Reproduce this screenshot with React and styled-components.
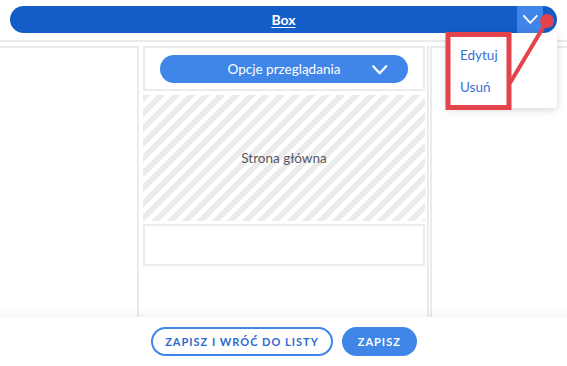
import React from 'react';
import styled, { createGlobalStyle } from 'styled-components';

const Global = createGlobalStyle`
  html, body { margin: 0; padding: 0; background: #fff; }
  body { font-family: Lato, "Liberation Sans", sans-serif; }
  * { box-sizing: border-box; }
`;

const Page = styled.div`
  position: relative;
  width: 567px;
  height: 366px;
  display: flex;
  flex-direction: column;
  background: #fff;
  overflow: hidden;
`;

const Header = styled.div`
  padding: 6px 10px 7px;
`;

const Bar = styled.div`
  height: 27px;
  border-radius: 14px;
  background: #135dc8;
  display: flex;
  align-items: stretch;
  padding-right: 14px;
`;

const BarTitle = styled.a`
  flex: 1;
  padding-left: 40px;
  display: flex;
  align-items: center;
  justify-content: center;
  color: #fff;
  font-size: 14px;
  font-weight: 700;
  text-decoration: underline;
  text-underline-offset: 2px;
`;

const BarToggle = styled.div`
  width: 26px;
  background: #3f86e8;
  display: flex;
  align-items: center;
  justify-content: center;
`;

const Divider = styled.div`
  height: 2px;
  background: #ececec;
`;

const Content = styled.div`
  flex: 1;
  display: flex;
  padding-top: 4px;
  min-height: 0;
`;

const SideColumn = styled.div`
  width: ${p => p.$width}px;
  flex: ${p => (p.$width ? 'none' : '1')};
  border-top: 2px solid #ebebeb;
  border-${p => p.$side}: 2px solid #ebebeb;
  margin-${p => p.$side}: ${p => p.$gap}px;
`;

const MainColumn = styled.div`
  width: 290px;
  padding: 0 2px 0 4px;
  border-right: 2px solid #ebebeb;
  display: flex;
  flex-direction: column;
`;

const OptionsBox = styled.div`
  border: 2px solid #ebebeb;
  padding: 7px 15px 6px;
`;

const OptionsButton = styled.div`
  height: 28px;
  border-radius: 14px;
  background: #3f86e8;
  color: #fff;
  font-size: 13.5px;
  display: flex;
  align-items: center;
  justify-content: center;
  position: relative;
`;

const ButtonChevron = styled.span`
  position: absolute;
  right: 20px;
  top: 9px;
  display: flex;
`;

const Hatched = styled.div`
  margin-top: 4px;
  height: 126px;
  display: flex;
  align-items: center;
  justify-content: center;
  color: #575762;
  font-size: 13.5px;
  background: repeating-linear-gradient(
    135deg,
    #ebebeb 0 5.3px,
    #ffffff 5.3px 10.6px
  );
`;

const EmptyBox = styled.div`
  margin-top: 3px;
  height: 42px;
  border: 2px solid #ebebeb;
`;

const Footer = styled.div`
  height: 49px;
  display: flex;
  align-items: center;
  justify-content: center;
  gap: 9px;
  background: #fff;
  box-shadow: 0 -3px 8px rgba(0, 0, 0, 0.05);
  position: relative;
  padding-left: 1px;
`;

const Button = styled.button`
  height: 29px;
  padding: 0 ${p => (p.$primary ? 14 : 12)}px;
  border-radius: 15px;
  border: 2px solid #3f86e8;
  background: ${p => (p.$primary ? '#3f86e8' : '#fff')};
  color: ${p => (p.$primary ? '#fff' : '#2d6ad0')};
  font-family: Lato, "Liberation Sans", sans-serif;
  font-size: 11px;
  font-weight: 700;
  letter-spacing: 1px;
  text-transform: uppercase;
`;

const Menu = styled.div`
  position: absolute;
  top: 33px;
  left: 447px;
  width: 110px;
  height: 75px;
  background: #fff;
  border-radius: 0 0 4px 4px;
  box-shadow: 0 2px 8px rgba(0, 0, 0, 0.16);
  padding-top: 6px;
  display: flex;
  flex-direction: column;
`;

const MenuItem = styled.div`
  height: 32px;
  line-height: 32px;
  padding-left: 13px;
  color: #3b6fd0;
  font-size: 13.5px;
`;

const Annotation = styled.svg`
  position: absolute;
  left: 0;
  top: 0;
  pointer-events: none;
`;

const Chevron = ({ w, h, sw }) => (
  <svg width={w + sw * 2} height={h + sw * 2} viewBox={`0 0 ${w + sw * 2} ${h + sw * 2}`}>
    <polyline
      points={`${sw},${sw} ${sw + w / 2},${sw + h} ${sw + w},${sw}`}
      fill="none"
      stroke="#fff"
      strokeWidth={sw}
      strokeLinecap="round"
      strokeLinejoin="round"
    />
  </svg>
);

export default function App() {
  return (
    <>
      <Global />
      <Page>
        <Header>
          <Bar>
            <BarTitle>Box</BarTitle>
            <BarToggle>
              <Chevron w={13} h={7} sw={1.8} />
            </BarToggle>
          </Bar>
        </Header>
        <Divider />
        <Content>
          <SideColumn $width={139} $side="right" $gap={0} />
          <MainColumn>
            <OptionsBox>
              <OptionsButton>
                Opcje przeglądania
                <ButtonChevron>
                  <Chevron w={13} h={7} sw={2.2} />
                </ButtonChevron>
              </OptionsButton>
            </OptionsBox>
            <Hatched>Strona główna</Hatched>
            <EmptyBox />
          </MainColumn>
          <SideColumn $side="left" $gap={1} />
        </Content>
        <Footer>
          <Button>Zapisz i wróć do listy</Button>
          <Button $primary>Zapisz</Button>
        </Footer>
        <Menu>
          <MenuItem>Edytuj</MenuItem>
          <MenuItem>Usuń</MenuItem>
        </Menu>
        <Annotation width="567" height="366" viewBox="0 0 567 366">
          <rect x="448" y="34.5" width="61" height="73" fill="none" stroke="#e5434b" strokeWidth="5" />
          <line x1="547" y1="21" x2="510" y2="83" stroke="#e5434b" strokeWidth="4" />
          <circle cx="547" cy="21" r="7" fill="#e5434b" />
        </Annotation>
      </Page>
    </>
  );
}
